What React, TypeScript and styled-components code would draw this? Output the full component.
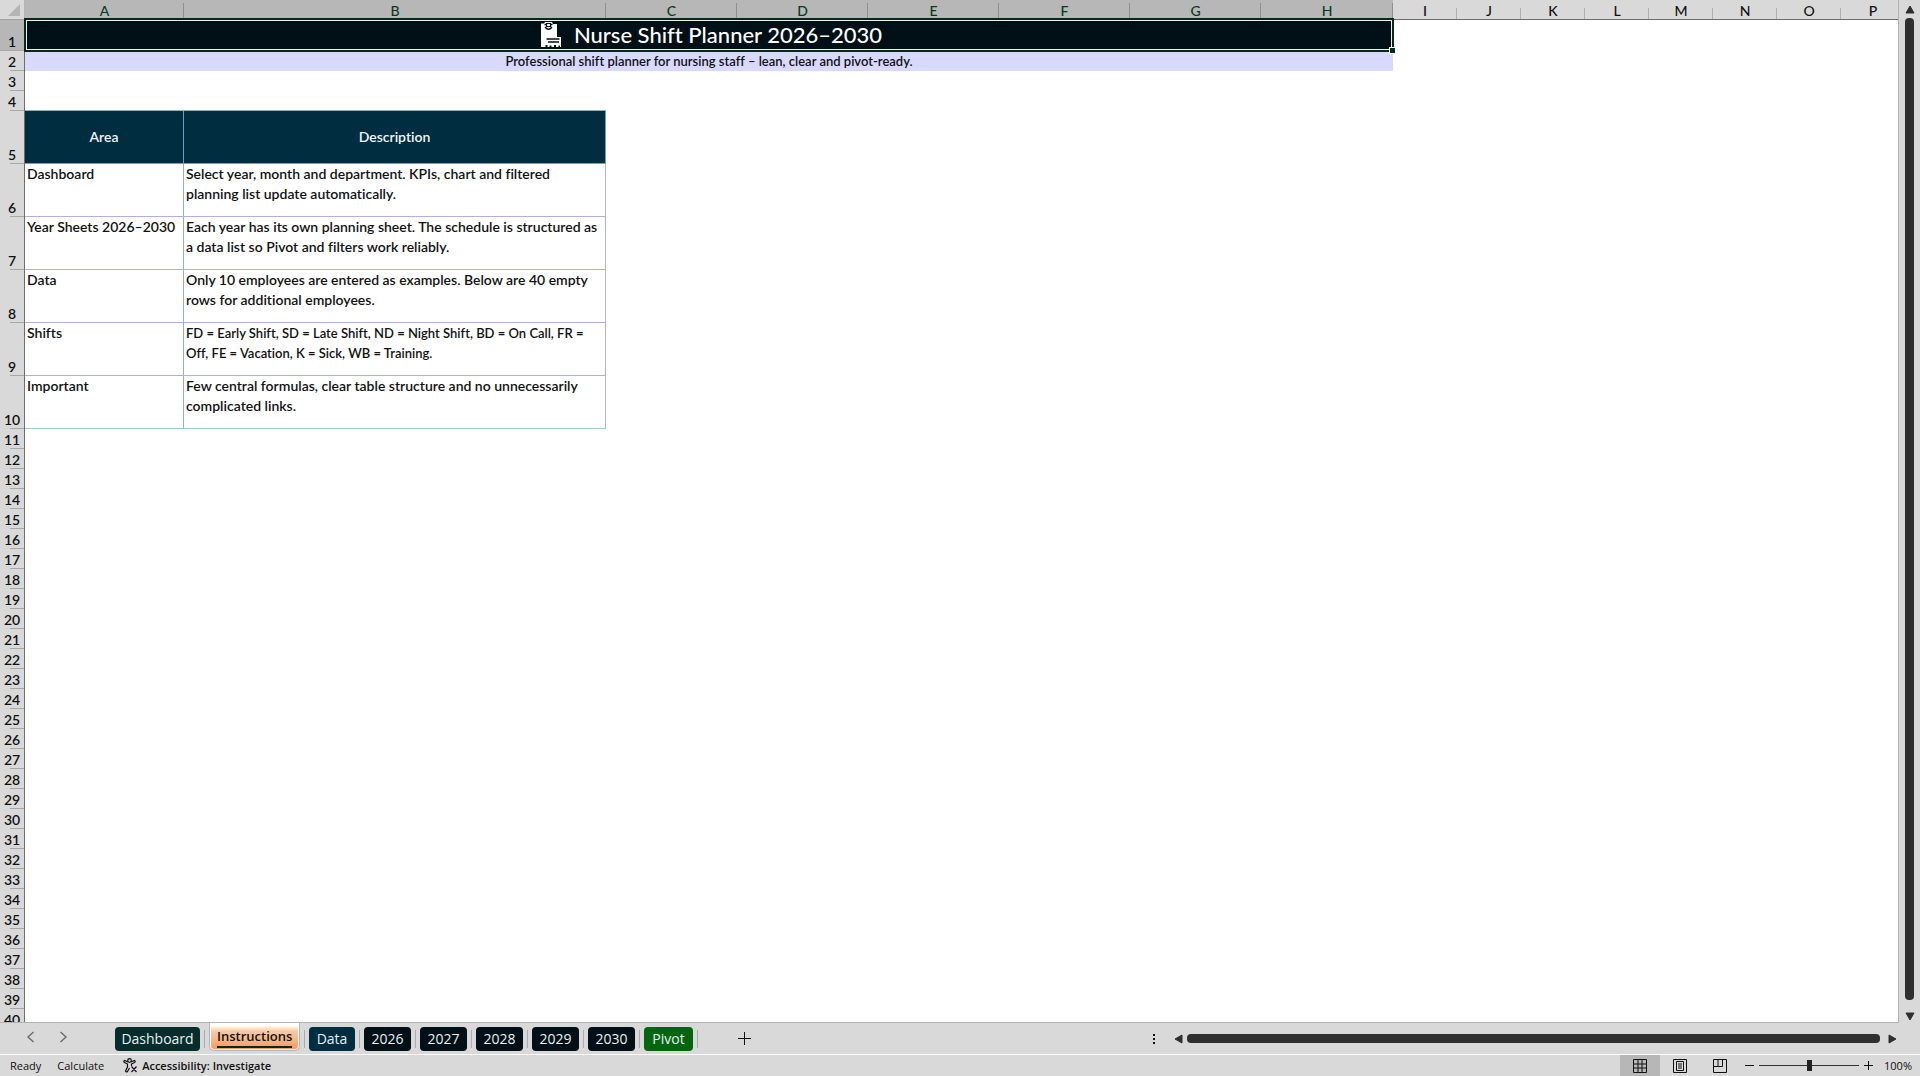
import React from "react";
import styled, { createGlobalStyle } from "styled-components";

const cellFont = `Lato, "Open Sans", sans-serif`;
const uiFont = `"Open Sans", "Noto Sans", sans-serif`;

const Global = createGlobalStyle`
  *, *::before, *::after { box-sizing: border-box; }
  html, body { margin: 0; }
  body { background: #d9d9d9; color: #111; font-family: ${uiFont}; font-size: 11px; }
  button { font: inherit; color: inherit; border: 0; padding: 0; background: none; cursor: pointer; }
`;

const Page = styled.div`
  display: flex;
  flex-direction: column;
  height: 100vh;
  overflow: hidden;
`;

const Workspace = styled.div`
  display: flex;
  flex: 1;
  min-height: 0;
`;

const SheetArea = styled.main`
  flex: 1;
  min-width: 0;
  overflow: hidden;
  background: #fff;
  border-right: 1px solid #b4b4b4;
  border-bottom: 1px solid #b4b4b4;
`;

const Grid = styled.table`
  width: 100%;
  table-layout: fixed;
  border-collapse: separate;
  border-spacing: 0;
  font-family: ${cellFont};
  font-size: 14px;
  font-variant-ligatures: none;
  line-height: 20px;
`;

const Col = styled.col<{ $w: number }>`
  width: ${(p) => p.$w}px;
`;

const Corner = styled.td`
  height: 20px;
  padding: 0 4px 3px 0;
  text-align: right;
  vertical-align: bottom;
  line-height: 0;
  background: #d9d9d9;
  border-right: 1px solid #b4b4b4;
  border-bottom: 1px solid #a0a0a0;
`;

const ColHead = styled.th<{ $on: boolean }>`
  height: 20px;
  padding: 2px 0 0;
  font-weight: 500;
  line-height: 17px;
  color: ${(p) => (p.$on ? "#0a3a1e" : "#111")};
  background: ${(p) =>
    p.$on
      ? "linear-gradient(#8f8f8f, #8f8f8f) right bottom / 1px 16px no-repeat #b7b7b7"
      : "linear-gradient(#b0b0b0, #b0b0b0) right bottom / 1px 11px no-repeat #d9d9d9"};
  border-bottom: 1px solid ${(p) => (p.$on ? "#062b14" : "#6e6e6e")};
`;

const RowHead = styled.th<{ $h: number; $on: boolean }>`
  height: ${(p) => p.$h}px;
  padding: 0;
  font-weight: 600;
  line-height: 18px;
  text-align: center;
  vertical-align: bottom;
  background: linear-gradient(#a8a8a8, #a8a8a8) right bottom / ${(p) => (p.$on ? 24 : 14)}px 1px no-repeat
    ${(p) => (p.$on ? "#b7b7b7" : "#d9d9d9")};
  border-right: 1px solid #6e6e6e;
`;

const TitleCell = styled.td`
  position: relative;
  padding: 0;
  background: #010f16;
  color: #fff;
  font-size: 22px;
  font-weight: 500;
  line-height: 30px;
  vertical-align: top;
`;

const TitleContent = styled.div`
  display: flex;
  align-items: center;
  justify-content: center;
  gap: 12px;
  padding-left: 4px;
`;

const Selection = styled.div`
  position: absolute;
  inset: -2px -1px -1px -1px;
  border: 2px solid #062b14;
  box-shadow: inset 0 0 0 1px #e8f0f0;
  pointer-events: none;

  &::after {
    content: "";
    position: absolute;
    right: -3px;
    bottom: -3px;
    width: 5px;
    height: 5px;
    background: #062b14;
    outline: 1px solid #fff;
  }
`;

const SubtitleCell = styled.td`
  padding: 1px 0 0;
  text-align: center;
  font-size: 13px;
  font-weight: 600;
  line-height: 18px;
  vertical-align: top;
  background: #d9d9ff;
`;

const Blank = styled.td<{ $underline?: boolean }>`
  padding: 0;
  ${(p) => (p.$underline ? "border-bottom: 1px solid #8fb5b5;" : "")}
`;

const AreaHead = styled.td`
  padding: 0;
  text-align: center;
  font-weight: 600;
  color: #eef6fa;
  background: #002d3f;
  border-right: 1px solid #6f9dc0;
  border-bottom: 1px solid #6f9dc0;
`;

const BodyCell = styled.td<{ $edge: string; $last: boolean; $dense?: boolean }>`
  padding: 0 2px;
  vertical-align: top;
  font-size: ${(p) => (p.$dense ? 13 : 14)}px;
  font-weight: 600;
  white-space: pre-line;
  border-right: 1px solid ${(p) => p.$edge};
  border-bottom: 1px solid ${(p) => (p.$last ? "#a5cccc" : "#b0b0dc")};
`;

const VScroll = styled.div`
  display: flex;
  flex-direction: column;
  align-items: center;
  width: 21px;
  padding: 5px 0 2px;
  gap: 4px;
`;

const ArrowButton = styled.button`
  display: flex;
  align-items: center;
  justify-content: center;
`;

const VThumb = styled.div`
  flex: 1;
  width: 9px;
  margin-bottom: 8px;
  border-radius: 4px;
  background: #2f2f2f;
`;

const TabBar = styled.div`
  display: flex;
  align-items: center;
  height: 32px;
  border-bottom: 1px solid #fff;
  padding-right: 23px;
`;

const TabNav = styled.div`
  display: flex;
  width: 115px;
  padding-left: 26px;
  gap: 24px;
`;

const Tabs = styled.nav`
  display: flex;
  align-items: center;
  align-self: stretch;
`;

const TabSlot = styled.div`
  display: flex;
  align-items: center;
  align-self: stretch;

  &::after {
    content: "";
    width: 1px;
    height: 18px;
    margin: 0 4px;
    background: #ababab;
  }
`;

const Tab = styled.button<{ $bg: string; $w: number }>`
  width: ${(p) => p.$w}px;
  height: 24px;
  border-radius: 4px;
  font-size: 14px;
  line-height: 24px;
  color: #e6f1f5;
  background: ${(p) => p.$bg};
`;

const ActiveTab = styled.button`
  width: 91px;
  height: 28px;
  align-self: flex-start;
  padding: 0 7px;
  border: 1px solid #b4b4b4;
  border-top: 0;
  border-radius: 0 0 5px 5px;
  box-shadow: inset 0 0 0 1px #fff;
  font-size: 13px;
  font-weight: 600;
  line-height: 20px;
  background: linear-gradient(#fff 3px, #fff3d0 4px, #f5c9b0 8px, #f9b987 16px, #ff9b66 24px);
`;

const ActiveLabel = styled.span`
  display: block;
  margin-top: 1px;
  border-bottom: 2px solid #062b14;
`;

const AddTab = styled.button`
  display: flex;
  margin-left: 36px;
`;

const HScroll = styled.div`
  display: flex;
  flex: 1;
  align-items: center;
  justify-content: flex-end;
`;

const HTrack = styled.div`
  display: flex;
  align-items: center;
  width: 66%;
  max-width: 745px;
  gap: 4px;
`;

const HThumb = styled.div`
  flex: 1;
  height: 9px;
  margin-right: 4px;
  border-radius: 4px;
  background: #2f2f2f;
`;

const MoreButton = styled.button`
  display: flex;
  margin-right: 14px;
`;

const StatusBar = styled.footer`
  display: flex;
  align-items: center;
  height: 21px;
  padding: 0 8px 0 10px;
`;

const StatusText = styled.span`
  margin-right: 16px;
`;

const AccessButton = styled.button`
  display: flex;
  align-items: center;
  gap: 4px;
  margin-left: 3px;
  font-weight: 600;
`;

const Spacer = styled.div`
  flex: 1;
`;

const ViewButton = styled.button<{ $on?: boolean }>`
  display: flex;
  align-items: center;
  justify-content: center;
  align-self: stretch;
  width: 40px;
  background: ${(p) => (p.$on ? "#b7b7b7" : "transparent")};
`;

const ZoomGroup = styled.div`
  display: flex;
  align-items: center;
  gap: 5px;
  margin-left: 5px;
`;

const ZoomRange = styled.input`
  appearance: none;
  width: 100px;
  height: 12px;
  margin: 0;
  background: linear-gradient(#333, #333) center / 100% 1px no-repeat;

  &::-webkit-slider-thumb {
    appearance: none;
    width: 5px;
    height: 11px;
    background: #222;
  }
`;

const ZoomValue = styled.output`
  width: 34px;
  text-align: right;
  white-space: nowrap;
`;

const letters = "ABCDEFGHIJKLMNOP".split("");
const widths = [25, 159, 422, 131, 131, 131, 131, 131, 132, 64, 64, 64, 64, 64, 64, 64, 64];

const areas = [
  { area: "Dashboard", text: "Select year, month and department. KPIs, chart and filtered\nplanning list update automatically." },
  { area: "Year Sheets 2026–2030", text: "Each year has its own planning sheet. The schedule is structured as\na data list so Pivot and filters work reliably." },
  { area: "Data", text: "Only 10 employees are entered as examples. Below are 40 empty\nrows for additional employees." },
  { area: "Shifts", text: "FD = Early Shift, SD = Late Shift, ND = Night Shift, BD = On Call, FR =\nOff, FE = Vacation, K = Sick, WB = Training.", dense: true },
  { area: "Important", text: "Few central formulas, clear table structure and no unnecessarily\ncomplicated links." },
];

const tabs = [
  { name: "Dashboard", bg: "#062c2c", w: 85 },
  { name: "Instructions", bg: "", w: 91 },
  { name: "Data", bg: "#002d3f", w: 46 },
  { name: "2026", bg: "#010f16", w: 47 },
  { name: "2027", bg: "#010f16", w: 47 },
  { name: "2028", bg: "#010f16", w: 47 },
  { name: "2029", bg: "#010f16", w: 47 },
  { name: "2030", bg: "#010f16", w: 47 },
  { name: "Pivot", bg: "#04650f", w: 49 },
];

const arrowPaths = {
  up: "M5 1 9 8H1z",
  down: "M1 1h8L5 8z",
  left: "M1 5 8 1v8z",
  right: "M8 5 1 1v8z",
};

function Arrow({ dir }: { dir: keyof typeof arrowPaths }) {
  const vertical = dir === "up" || dir === "down";
  return (
    <ArrowButton aria-label={`Scroll ${dir}`}>
      <svg width={vertical ? 10 : 9} height={vertical ? 9 : 10}>
        <path d={arrowPaths[dir]} fill="#2f2f2f" stroke="#2f2f2f" strokeLinejoin="round" />
      </svg>
    </ArrowButton>
  );
}

function Chevron({ d, label }: { d: string; label: string }) {
  return (
    <button aria-label={label}>
      <svg width="9" height="12" fill="none" stroke="#6b6b6b" strokeWidth="1.4">
        <path d={d} />
      </svg>
    </button>
  );
}

function ClipboardIcon() {
  return (
    <svg width="22" height="26" viewBox="0 0 22 26" aria-hidden="true">
      <path d="M1 1.500h3L5 0h7l1 2h4v13h4v10H1z" fill="#fff" />
      <path d="M4.500 2.500h2M10.500 2.500h2M5 5q3.500 4.500 7 0" stroke="#010f16" strokeWidth="1.300" fill="none" />
      <path d="M6.500 1.500h4v3h-4z" stroke="#010f16" strokeWidth="1.200" fill="#fff" />
      <path d="M6.500 17h13M8 20h11" stroke="#010f16" strokeWidth="1.400" />
      <path d="M5.500 25v-2h2v2M9.500 25v-1.500h2V25M14 25v-2h2v2M18.500 25v-1.500h1.500V25" fill="#010f16" />
    </svg>
  );
}

function AccessibilityIcon() {
  return (
    <svg width="15" height="15" viewBox="0 0 15 15" fill="none" stroke="#111" strokeWidth="1.200">
      <circle cx="6.500" cy="2.500" r="1.800" />
      <path d="M5 4 1.500 2.500Q0 3.500 1.500 4.500L4.500 6v3L2.500 13q.5 1.500 2 .5l2-3.500M8 4l3.500-1.500q1.500 1 0 2L8.500 6v2M8.500 8.500l5 5.500M13.500 8.500l-5 5.500" />
    </svg>
  );
}

export default function App() {
  return (
    <Page>
      <Global />
      <Workspace>
        <SheetArea>
          <Grid>
            <colgroup>
              {widths.map((w, i) => (
                <Col key={i} $w={w} />
              ))}
            </colgroup>
            <thead>
              <tr>
                <Corner>
                  <svg width="12" height="12" aria-hidden="true">
                    <path d="M12 0v12H0z" fill="#b4b4b4" />
                  </svg>
                </Corner>
                {letters.map((l, i) => (
                  <ColHead key={l} scope="col" $on={i < 8}>
                    {l}
                  </ColHead>
                ))}
              </tr>
            </thead>
            <tbody>
              <tr>
                <RowHead scope="row" $h={31} $on>1</RowHead>
                <TitleCell colSpan={8}>
                  <TitleContent>
                    <ClipboardIcon />
                    Nurse Shift Planner 2026–2030
                  </TitleContent>
                  <Selection />
                </TitleCell>
                <Blank colSpan={8} />
              </tr>
              <tr>
                <RowHead scope="row" $h={20} $on={false}>2</RowHead>
                <SubtitleCell colSpan={8}>
                  Professional shift planner for nursing staff – lean, clear and pivot-ready.
                </SubtitleCell>
                <Blank colSpan={8} />
              </tr>
              <tr>
                <RowHead scope="row" $h={20} $on={false}>3</RowHead>
                <Blank colSpan={16} />
              </tr>
              <tr>
                <RowHead scope="row" $h={20} $on={false}>4</RowHead>
                <Blank colSpan={2} $underline />
                <Blank colSpan={14} />
              </tr>
              <tr>
                <RowHead scope="row" $h={53} $on={false}>5</RowHead>
                <AreaHead>Area</AreaHead>
                <AreaHead>Description</AreaHead>
                <Blank colSpan={14} />
              </tr>
              {areas.map(({ area, text, dense }, i) => (
                <tr key={area}>
                  <RowHead scope="row" $h={53} $on={false}>{i + 6}</RowHead>
                  <BodyCell $edge="#8fb5b5" $last={i === 4}>{area}</BodyCell>
                  <BodyCell $edge="#b0b0dc" $last={i === 4} $dense={dense}>{text}</BodyCell>
                  <Blank colSpan={14} />
                </tr>
              ))}
              {Array.from({ length: 30 }, (_, i) => (
                <tr key={i}>
                  <RowHead scope="row" $h={20} $on={false}>{i + 11}</RowHead>
                  <Blank colSpan={16} />
                </tr>
              ))}
            </tbody>
          </Grid>
        </SheetArea>
        <VScroll>
          <Arrow dir="up" />
          <VThumb />
          <Arrow dir="down" />
        </VScroll>
      </Workspace>
      <TabBar>
        <TabNav>
          <Chevron d="M7.500 1 2 6l5.500 5" label="Previous sheet" />
          <Chevron d="M1.500 1 7 6l-5.500 5" label="Next sheet" />
        </TabNav>
        <Tabs aria-label="Sheets">
          {tabs.map((t) => (
            <TabSlot key={t.name}>
              {t.bg ? (
                <Tab $bg={t.bg} $w={t.w}>{t.name}</Tab>
              ) : (
                <ActiveTab aria-current="page">
                  <ActiveLabel>{t.name}</ActiveLabel>
                </ActiveTab>
              )}
            </TabSlot>
          ))}
        </Tabs>
        <AddTab aria-label="New sheet">
          <svg width="13" height="13" stroke="#111" strokeWidth="1">
            <path d="M6.500 0v13M0 6.500h13" />
          </svg>
        </AddTab>
        <HScroll>
          <HTrack>
            <MoreButton aria-label="Resize tab bar">
              <svg width="4" height="12" fill="#111">
                <path d="M1 1h2v2H1zM1 5h2v2H1zM1 9h2v2H1z" />
              </svg>
            </MoreButton>
            <Arrow dir="left" />
            <HThumb />
            <Arrow dir="right" />
          </HTrack>
        </HScroll>
      </TabBar>
      <StatusBar>
        <StatusText>Ready</StatusText>
        <StatusText>Calculate</StatusText>
        <AccessButton>
          <AccessibilityIcon />
          Accessibility: Investigate
        </AccessButton>
        <Spacer />
        <ViewButton $on aria-label="Normal view">
          <svg width="14" height="14" fill="none" stroke="#111">
            <path d="M.5.5h13v13H.5zM.5 5h13M.5 9h13M5 .5v13M9 .5v13" />
          </svg>
        </ViewButton>
        <ViewButton aria-label="Page layout view">
          <svg width="14" height="14" fill="none" stroke="#111">
            <path d="M.5.5h13v13H.5zM3.500 2.500h7v9h-7zM5 5h4M5 7h4M5 9h4" />
          </svg>
        </ViewButton>
        <ViewButton aria-label="Page break view">
          <svg width="14" height="14" fill="none" stroke="#111">
            <path d="M.5.5h13v13H.5zM.5 7.500h9v-7M5 .5v7" />
          </svg>
        </ViewButton>
        <ZoomGroup>
          <button aria-label="Zoom out">
            <svg width="9" height="9" stroke="#111"><path d="M0 4.500h9" /></svg>
          </button>
          <ZoomRange type="range" min="0" max="100" defaultValue="50" aria-label="Zoom" />
          <button aria-label="Zoom in">
            <svg width="9" height="9" stroke="#111"><path d="M0 4.500h9M4.500 0v9" /></svg>
          </button>
          <ZoomValue>100%</ZoomValue>
        </ZoomGroup>
      </StatusBar>
    </Page>
  );
}
